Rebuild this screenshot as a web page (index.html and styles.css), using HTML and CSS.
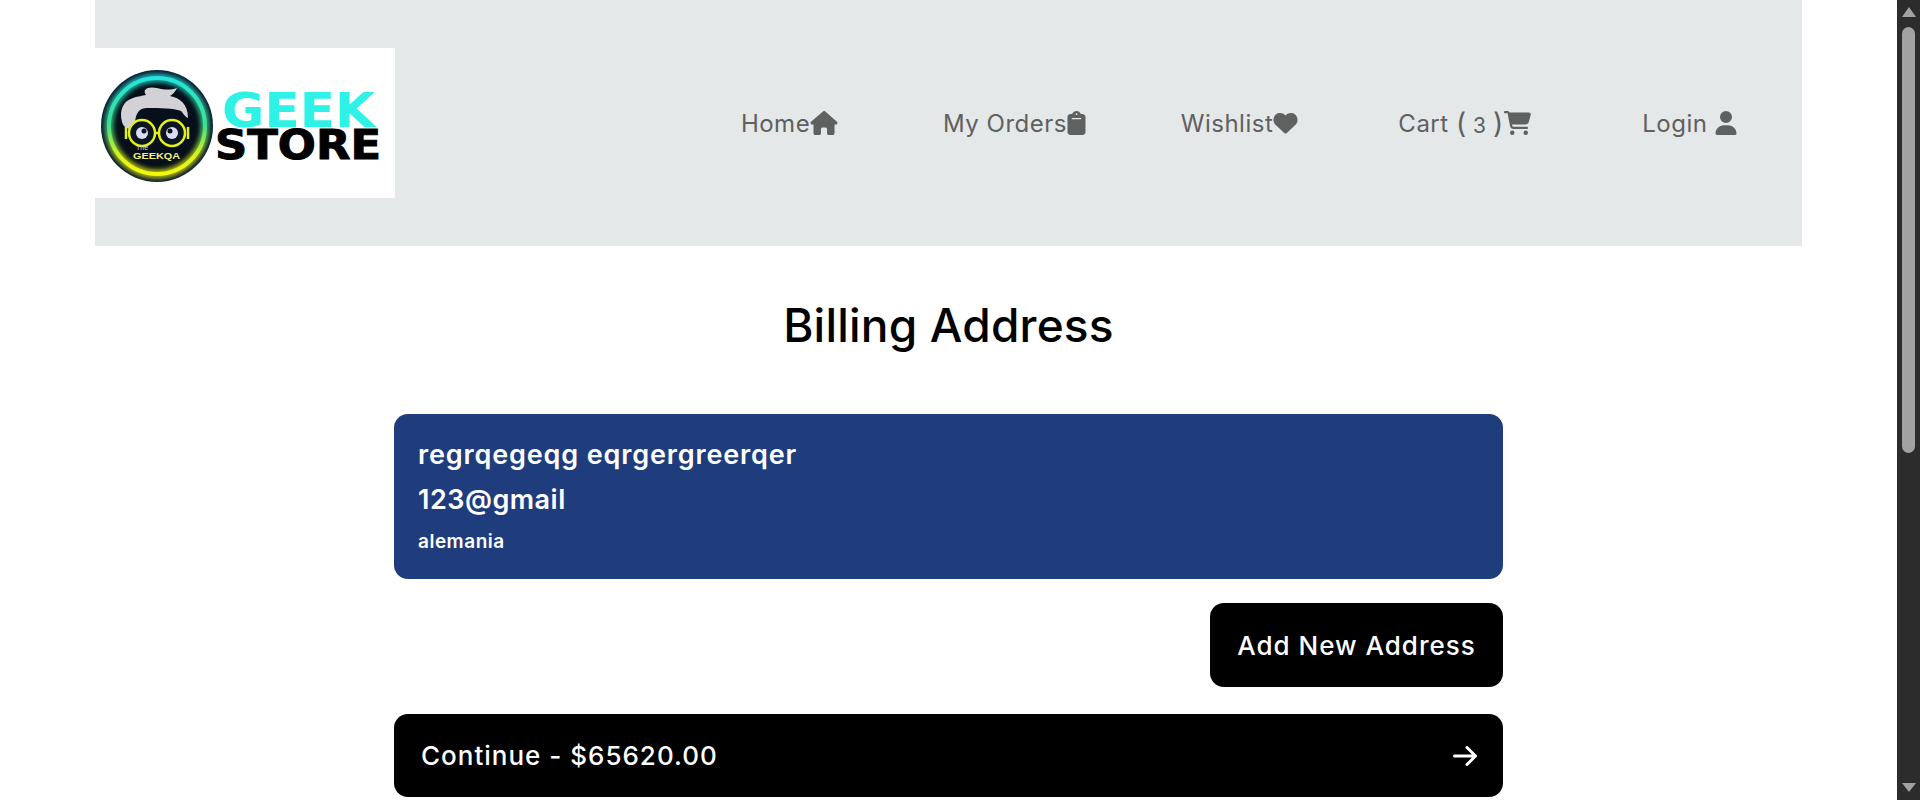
FILE: index.html
```html
<!DOCTYPE html>
<html lang="en">
<head>
<meta charset="utf-8">
<title>Billing Address</title>
<link rel="stylesheet" href="styles.css">
</head>
<body>
<div class="page">
  <header class="header">
    <a class="logo" href="#">
      <svg class="logo-art" viewBox="0 0 300 150" width="300" height="150">
        <defs>
          <linearGradient id="ring" x1="0" y1="0" x2="0" y2="1">
            <stop offset="0" stop-color="#22e6dc"/>
            <stop offset="0.5" stop-color="#3fe08c"/>
            <stop offset="0.8" stop-color="#d8f418"/>
            <stop offset="1" stop-color="#f4f80c"/>
          </linearGradient>
          <filter id="glow" x="-20%" y="-20%" width="140%" height="140%">
            <feGaussianBlur stdDeviation="2"/>
          </filter>
        </defs>
        <circle cx="62" cy="78" r="56" fill="#0b1a30"/>
        <path d="M6 76H118" stroke="#3fb4d8" stroke-width="2" opacity=".75" filter="url(#glow)"/>
        <circle cx="62" cy="78" r="47" fill="#060f1a"/>
        <circle cx="62" cy="78" r="48" fill="none" stroke="url(#ring)" stroke-width="9" opacity=".7" filter="url(#glow)"/>
        <circle cx="62" cy="78" r="48" fill="none" stroke="url(#ring)" stroke-width="4"/>
        <path d="M27 74C24 62 28 53 38 50C44 48 47 48 51 47C47 42 52 38 62 40C70 42 76 42 82 40C80 44 78 46 75 48C85 50 93 56 93 70C90 69 88 65 86 63C78 60 66 60 52 60C45 60 41 64 40 74C39 79 37 81 34 81C31 80 28 78 27 74Z" fill="#d2d2d6"/>
        <circle cx="47" cy="85" r="13" fill="#0b1622" stroke="#e4f018" stroke-width="2.500"/>
        <circle cx="77" cy="85" r="13" fill="#0b1622" stroke="#e4f018" stroke-width="2.500"/>
        <path d="M60 85H64M31 79V91M93 79V91" stroke="#e4f018" stroke-width="2.500"/>
        <circle cx="47" cy="85" r="6" fill="#dcdcf6"/>
        <circle cx="77" cy="85" r="6" fill="#dcdcf6"/>
        <circle cx="49" cy="83" r="2.500" fill="#0b1622"/>
        <circle cx="75" cy="83" r="2.500" fill="#0b1622"/>
        <text x="41" y="102" class="logo-small">The</text>
        <text x="38" y="111" class="logo-brand" textLength="47" lengthAdjust="spacingAndGlyphs">GEEKQA</text>
        <text x="127" y="79" class="logo-geek" textLength="153" lengthAdjust="spacingAndGlyphs">GEEK</text>
        <text x="120" y="111" class="logo-store" textLength="166" lengthAdjust="spacingAndGlyphs">STORE</text>
      </svg>
    </a>
    <nav class="nav">
      <a class="nav-item" href="#">Home<svg class="icon" viewBox="0 0 576 512"><path d="M575.800 255.500c0 18-15 32.100-32 32.100h-32l.7 160.200c0 2.700-.2 5.400-.5 8.100V472c0 22.100-17.900 40-40 40H456c-1.100 0-2.200 0-3.300-.1-1.400 .1-2.800 .1-4.200 .1H416 392c-22.100 0-40-17.900-40-40V448 384c0-17.700-14.300-32-32-32H256c-17.700 0-32 14.300-32 32v64 24c0 22.100-17.900 40-40 40H160 128.100c-1.500 0-3-.1-4.500-.2-1.200 .1-2.400 .2-3.600 .2H104c-22.100 0-40-17.900-40-40V360c0-.9 0-1.900 .1-2.800V287.600H32c-18 0-32-14-32-32.100 0-9 3-17 10-24L266.400 8c7-7 15-8 22-8s15 2 21 7L564.800 231.500c8 7 12 15 11 24z"/></svg></a>
      <a class="nav-item" href="#">My Orders<svg class="icon icon-clip" viewBox="0 0 384 512"><path fill-rule="evenodd" d="M192 0c-41.800 0-77.400 26.700-90.500 64H64C28.700 64 0 92.700 0 128V448c0 35.300 28.700 64 64 64H320c35.300 0 64-28.700 64-64V128c0-35.300-28.700-64-64-64H282.500C269.400 26.700 233.800 0 192 0zM192 50a18 18 0 1 1 0 36 18 18 0 1 1 0-36zM92 150H292V176H92z"/></svg></a>
      <a class="nav-item" href="#">Wishlist<svg class="icon icon-heart" viewBox="0 0 512 512"><path d="M47.600 300.400L228.300 469.100c7.500 7 17.400 10.900 27.700 10.900s20.200-3.900 27.700-10.900L464.400 300.400c30.400-28.300 47.600-68 47.600-109.500v-5.800c0-69.900-50.500-129.500-119.400-141C347 36.500 300.600 51.400 268 84L256 96 244 84c-32.600-32.600-79-47.500-124.600-39.900C50.500 55.600 0 115.200 0 185.100v5.800c0 41.500 17.200 81.200 47.600 109.500z"/></svg></a>
      <a class="nav-item" href="#">Cart <span class="cart-count"><span class="paren">(</span> 3 <span class="paren">)</span></span><svg class="icon icon-cart" viewBox="0 0 576 512"><path d="M0 24C0 10.700 10.700 0 24 0H69.500c22 0 41.500 12.800 50.600 32h411c26.300 0 45.500 25 38.600 50.400l-41 152.300c-8.500 31.400-37 53.300-69.500 53.300H170.700l5.400 28.500c2.200 11.300 12.100 19.500 23.600 19.500H488c13.300 0 24 10.700 24 24s-10.700 24-24 24H199.700c-34.600 0-64.300-24.600-70.700-58.500L77.400 54.500c-.7-3.800-4-6.500-7.900-6.500H24C10.700 48 0 37.300 0 24zM128 464a48 48 0 1 1 96 0 48 48 0 1 1 -96 0zm336-48a48 48 0 1 1 0 96 48 48 0 1 1 0-96z"/></svg></a>
      <a class="nav-item" href="#">Login <svg class="icon icon-user" viewBox="0 0 448 512"><path d="M224 256A128 128 0 1 0 224 0a128 128 0 1 0 0 256zm-45.700 48C79.800 304 0 383.800 0 482.300C0 498.700 13.300 512 29.700 512H418.300c16.400 0 29.700-13.300 29.700-29.700C448 383.800 368.200 304 269.700 304H178.300z"/></svg></a>
    </nav>
  </header>
  <main class="content">
    <h1 class="title">Billing Address</h1>
    <div class="checkout">
      <section class="address-card">
        <p class="addr-name">regrqegeqg eqrgergreerqer</p>
        <p class="addr-email">123@gmail</p>
        <p class="addr-country">alemania</p>
      </section>
      <div class="add-row"><button class="btn btn-add">Add New Address</button></div>
      <button class="btn btn-continue"><span>Continue - $65620.00</span>
        <svg class="arrow" viewBox="0 0 24 20"><path d="M1.500 10H22.500M14 1.500L22.500 10L14 18.500"/></svg>
      </button>
    </div>
  </main>
</div>
<aside class="scrollbar" aria-hidden="true">
  <span class="tri tri-up"></span>
  <span class="track"><span class="thumb"></span></span>
  <span class="tri tri-down"></span>
</aside>
</body>
</html>
```
FILE: styles.css
```css
* { box-sizing: border-box; }
html, body { margin: 0; height: 800px; overflow: hidden; }
body {
  display: flex;
  background: #fff;
  font-family: "Inter", "Noto Sans", "Liberation Sans", sans-serif;
  color: #000;
}
.page { flex: 1; min-width: 0; padding: 0 95px; }
.header {
  display: flex;
  align-items: center;
  height: 246px;
  background: #e5e8e8;
}
.logo { display: block; width: 300px; height: 150px; background: #fff; flex: none; }
.logo-art { display: block; }
.logo-small { font: 7px "Liberation Sans", sans-serif; fill: #d8d8c0; }
.logo-brand { font: bold 9px "Liberation Sans", sans-serif; fill: #f2f27a; }
.logo-geek { font: bold 48px "DejaVu Sans", sans-serif; fill: #2ef2e6; }
.logo-store { font: bold 41px "DejaVu Sans", sans-serif; fill: #000; stroke: #000; stroke-width: 1; }
.nav {
  margin-left: auto;
  width: 1125px;
  display: grid;
  grid-template-columns: repeat(5, 225px);
}
.nav-item {
  display: flex;
  justify-content: center;
  align-items: center;
  color: #5f6060;
  font-size: 24px;
  letter-spacing: 0.5px;
  text-decoration: none;
  white-space: pre;
}
.icon { width: 28px; height: 24px; fill: #5f6060; flex: none; }
.icon-clip { width: 19px; }
.icon-heart { width: 25px; }
.icon-cart { width: 27px; }
.icon-user { width: 22px; }
.cart-count { font-size: 21px; white-space: pre; }
.paren { font-size: 28px; }
.content { display: flex; flex-direction: column; align-items: center; }
.title { margin: 51px 0 61px; font-size: 46px; font-weight: 500; line-height: 56px; letter-spacing: 0.2px; }
.checkout { width: 1109px; display: flex; flex-direction: column; }
.address-card {
  height: 165px;
  padding: 18px 24px;
  border-radius: 14px;
  background: #1f3d7d;
  color: #fff;
}
.address-card p { margin: 0; font-weight: 600; }
.addr-name, .addr-email { font-size: 27px; line-height: 45px; }
.addr-name { letter-spacing: 0.85px; }
.addr-email { letter-spacing: 0.5px; }
.addr-country { font-size: 19px; line-height: 40px; letter-spacing: 0.5px; }
.add-row { display: flex; justify-content: flex-end; margin: 24px 0 27px; }
.btn {
  border: 0;
  border-radius: 14px;
  background: #000;
  color: #fff;
  font: 500 26px "Inter", "Noto Sans", sans-serif;
  letter-spacing: 1px;
}
.btn-add { width: 293px; height: 84px; padding: 0; }
.btn-continue {
  display: flex;
  justify-content: space-between;
  align-items: center;
  height: 83px;
  padding: 0 26px 0 27px;
}
.arrow { width: 24px; height: 20px; fill: none; stroke: #fff; stroke-width: 3; stroke-linecap: round; stroke-linejoin: round; }
.scrollbar {
  flex: none;
  width: 23px;
  height: 800px;
  display: flex;
  flex-direction: column;
  align-items: center;
  background: #2c2c2c;
}
.track { flex: 1; width: 100%; padding: 0 5px; }
.thumb { display: block; height: 426px; border-radius: 7px; background: #a2a2a2; }
.tri { flex: none; width: 0; height: 0; border-left: 7px solid transparent; border-right: 7px solid transparent; }
.tri-up { margin: 7px 0 10px; border-bottom: 10px solid #a2a2a2; }
.tri-down { margin: 13px 0 8px; border-top: 9px solid #a2a2a2; }
```
